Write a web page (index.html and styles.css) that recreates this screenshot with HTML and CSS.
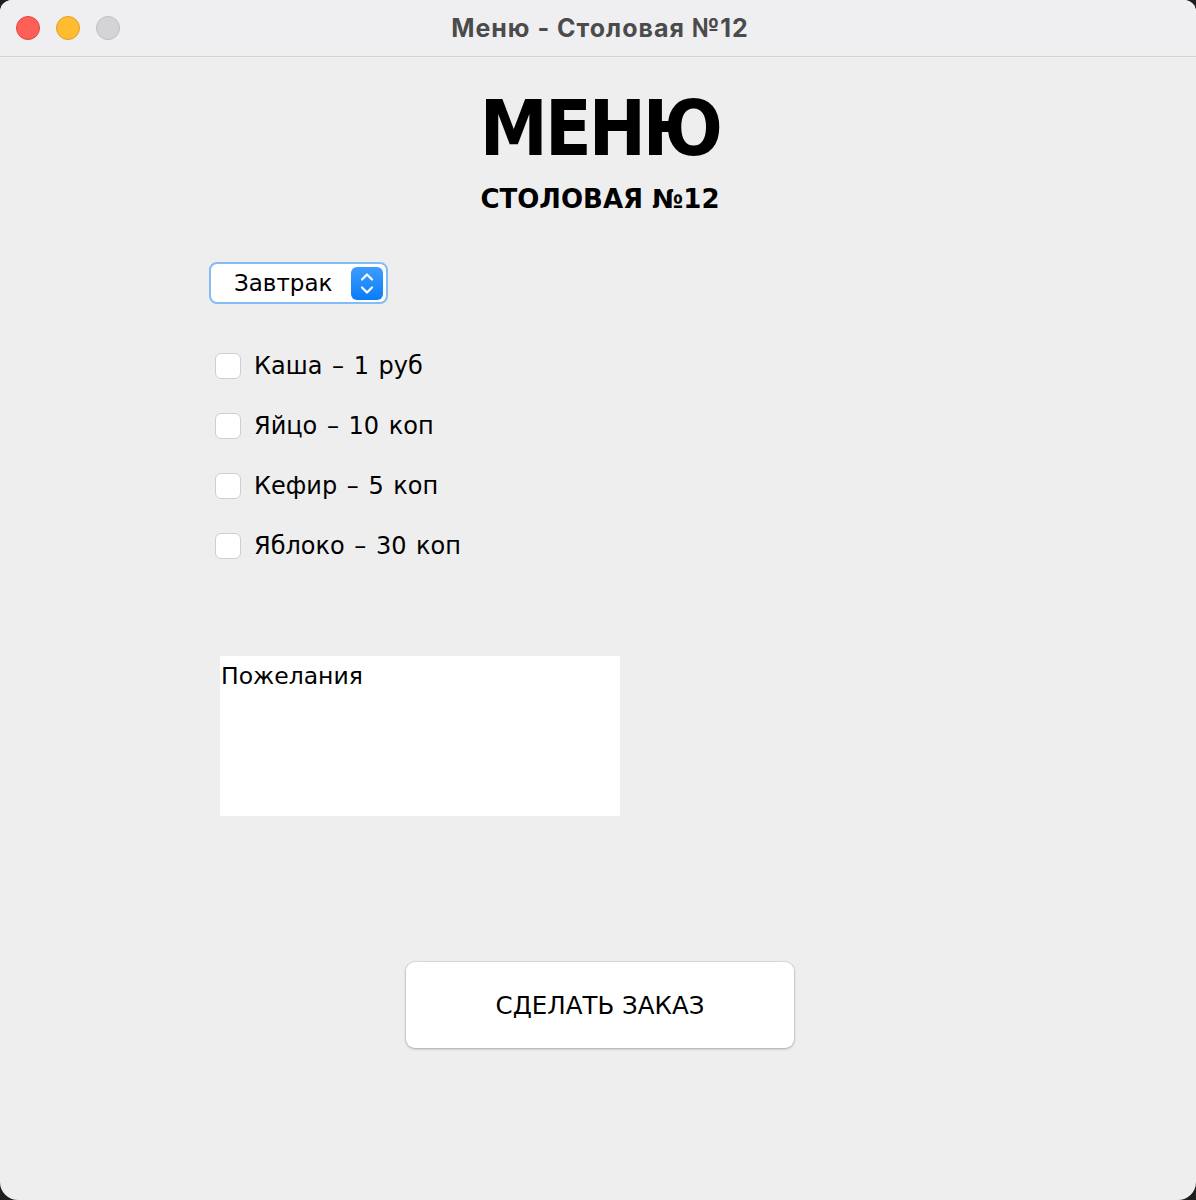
FILE: index.html
```html
<!DOCTYPE html>
<html lang="ru">
<head>
    <meta charset="UTF-8">
    <meta name="viewport" content="width=device-width, initial-scale=1.0">
    <title>Меню - Столовая №12</title>
    <link rel="stylesheet" href="styles.css">
</head>
<body>
    <div class="window">
        <div class="titlebar">
            <div class="lights">
                <span class="light light-close"></span>
                <span class="light light-min"></span>
                <span class="light light-max"></span>
            </div>
            <div class="window-title">Меню - Столовая №12</div>
        </div>

        <div class="content">
            <header class="header">
                <h1>МЕНЮ</h1>
                <h2>СТОЛОВАЯ №12</h2>
            </header>

            <form class="order-form">
                <div class="select">
                    <span class="select-value">Завтрак</span>
                    <span class="select-arrows">
                        <svg width="32" height="33" viewBox="0 0 32 33">
                            <path d="M11 12.5 L16 7.5 L21 12.5" fill="none" stroke="#fff" stroke-width="2.2" stroke-linecap="round" stroke-linejoin="round"/>
                            <path d="M11 20.5 L16 25.5 L21 20.5" fill="none" stroke="#fff" stroke-width="2.2" stroke-linecap="round" stroke-linejoin="round"/>
                        </svg>
                    </span>
                </div>

                <ul class="dishes">
                    <li><span class="check"></span>Каша – 1 руб</li>
                    <li><span class="check"></span>Яйцо – 10 коп</li>
                    <li><span class="check"></span>Кефир – 5 коп</li>
                    <li><span class="check"></span>Яблоко – 30 коп</li>
                </ul>

                <div class="wishes">Пожелания</div>

                <div class="actions">
                    <button type="button" class="submit">СДЕЛАТЬ ЗАКАЗ</button>
                </div>
            </form>
        </div>
    </div>
</body>
</html>
```

FILE: styles.css
```css
body {
    margin: 0;
    padding: 0;
    background: #1e1e1e;
    font-family: "DejaVu Sans", sans-serif;
}
.window {
    width: 1196px;
    height: 1200px;
    background: #eeeeee;
    border-radius: 12px 12px 18px 18px;
    overflow: hidden;
    display: flex;
    flex-direction: column;
}
.titlebar {
    height: 56px;
    background: #efeff1;
    border-bottom: 1px solid #d3d3d3;
    display: flex;
    align-items: center;
    position: relative;
}
.lights {
    display: flex;
    gap: 16px;
    padding-left: 16px;
}
.light {
    width: 22px;
    height: 22px;
    border-radius: 50%;
    border: 1px solid transparent;
}
.light-close { background: #fe5f57; border-color: #e2463f; }
.light-min { background: #febc2e; border-color: #e0a028; }
.light-max { background: #d4d4d6; border-color: #bfbfc1; }
.window-title {
    position: absolute;
    left: 4px;
    right: 0;
    text-align: center;
    font-family: Inter, sans-serif;
    font-weight: 700;
    font-size: 25px;
    letter-spacing: 1px;
    color: #4b4b4b;
}
.content {
    flex: 1;
    display: flex;
    flex-direction: column;
    padding-left: 4px;
}
.header {
    text-align: center;
    padding-top: 34px;
}
h1 {
    margin: 0;
    font-family: "DejaVu Sans Condensed", "DejaVu Sans", sans-serif;
    font-size: 76px;
    line-height: 1;
    font-weight: bold;
    letter-spacing: -3px;
    color: #000;
}
h2 {
    margin: 19px 0 0;
    font-size: 26px;
    line-height: 1;
    font-weight: bold;
    color: #000;
}
.order-form {
    display: flex;
    flex-direction: column;
    padding-left: 205px;
    margin-top: 50px;
}
.select {
    width: 179px;
    height: 42px;
    box-sizing: border-box;
    background: #fff;
    border: 2px solid #84bdf6;
    border-radius: 8px;
    display: flex;
    align-items: center;
    justify-content: space-between;
    padding: 0 3px 0 23px;
    font-size: 23px;
}
.select-arrows {
    width: 32px;
    height: 33px;
    border-radius: 6px;
    background: linear-gradient(#3d9dfd, #0a7cf8);
    display: flex;
}
.dishes {
    list-style: none;
    margin: 47px 0 0;
    padding: 0 0 0 6px;
    display: flex;
    flex-direction: column;
    gap: 30px;
}
.dishes li {
    display: flex;
    align-items: center;
    gap: 13px;
    height: 30px;
    font-size: 24px;
    word-spacing: 2px;
}
.check {
    width: 26px;
    height: 26px;
    box-sizing: border-box;
    background: #fff;
    border: 1px solid #cfcfcf;
    border-radius: 6px;
}
.wishes {
    width: 400px;
    height: 160px;
    margin: 95px 0 0 11px;
    background: #fff;
    font-size: 23.5px;
    padding: 6px 1px;
    box-sizing: border-box;
}
.actions {
    margin-top: 146px;
    margin-left: -205px;
    display: flex;
    justify-content: center;
}
.submit {
    width: 388px;
    height: 86px;
    background: #fff;
    border: none;
    border-radius: 9px;
    box-shadow: 0 0 0 1px rgba(0, 0, 0, 0.06), 0 1px 3px rgba(0, 0, 0, 0.25);
    font-family: "DejaVu Sans", sans-serif;
    font-size: 24.5px;
    color: #000;
}
```
